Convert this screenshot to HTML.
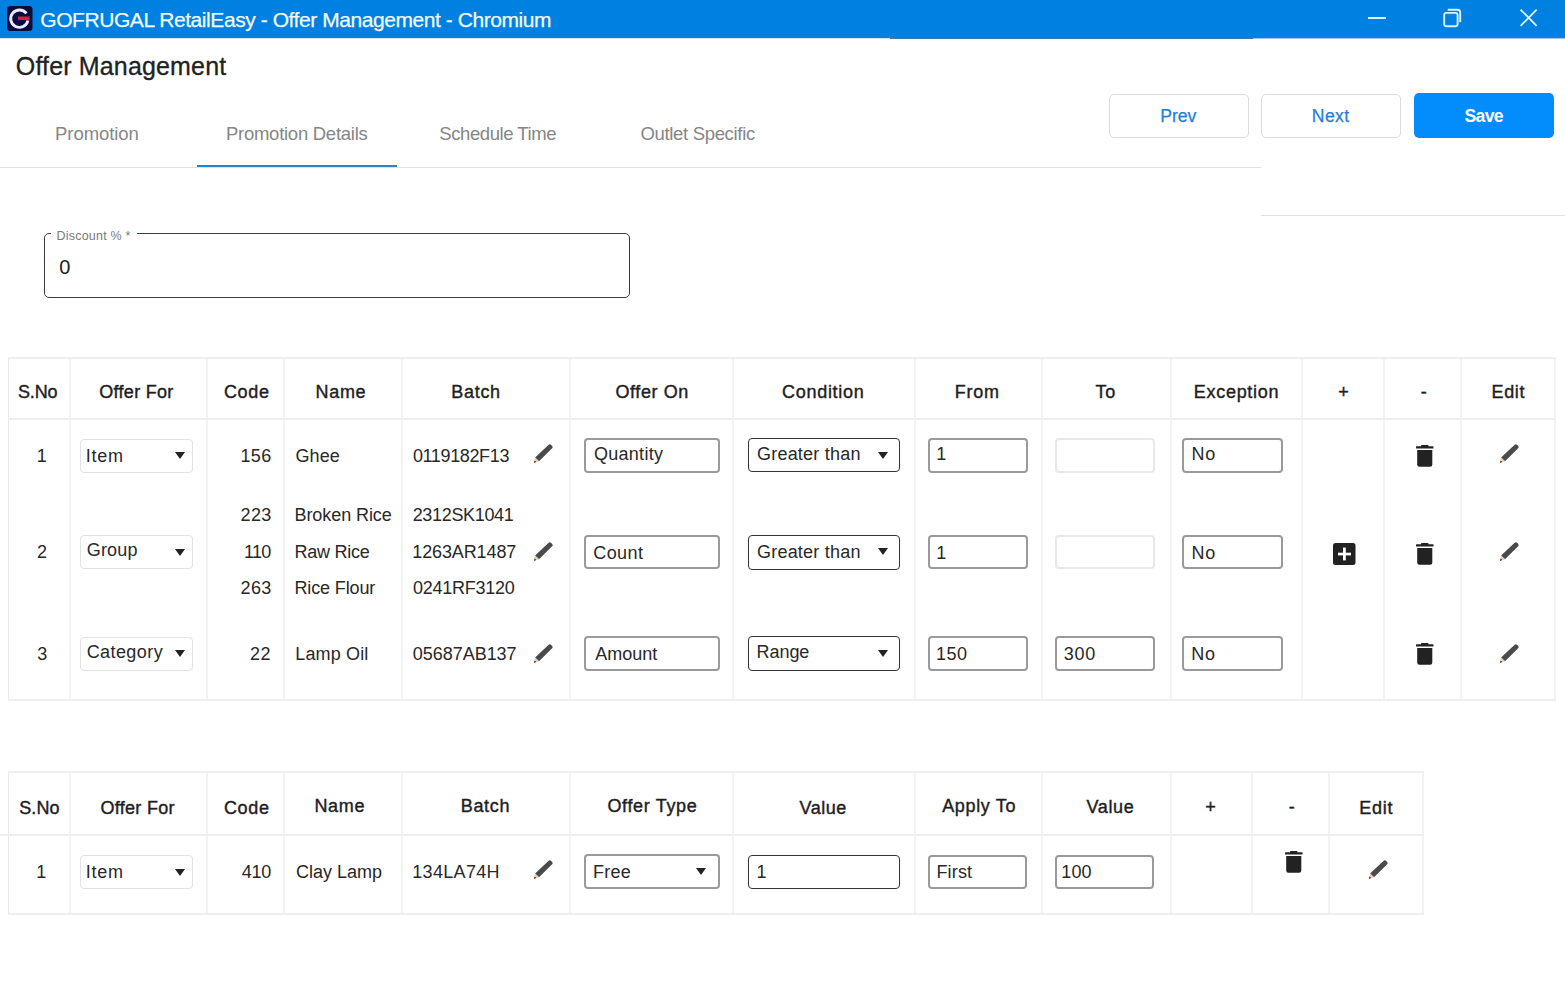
<!DOCTYPE html><html><head><meta charset="utf-8"><style>
html,body{margin:0;padding:0;background:#fff;width:1565px;height:1006px;overflow:hidden;position:relative;font-family:"Liberation Sans", sans-serif;}
.t{position:absolute;white-space:nowrap;line-height:1;font-family:"Liberation Sans", sans-serif;}
.b{position:absolute;}
</style></head><body>
<div class="b" style="left:0px;top:0px;width:1565px;height:38px;background:#0080E0;"></div>
<div class="b" style="left:0px;top:38px;width:890px;height:1px;background:#cfe6f8;"></div>
<div class="b" style="left:890px;top:38px;width:363px;height:1px;background:#3a78ad;"></div>
<div class="b" style="left:1253px;top:38px;width:312px;height:1px;background:#9cc6e8;"></div>
<svg class="b" style="left:7px;top:6px" width="26" height="26" viewBox="0 0 26 26"><rect x="0" y="0" width="25.5" height="25" rx="3.5" fill="#060d3c"/><path d="M19.38 7.46 A8.7 8.7 0 1 0 20.91 14.46" fill="none" stroke="#ebe8f4" stroke-width="2.9"/><rect x="11.1" y="10.5" width="11.5" height="3.6" fill="#dc1c38"/></svg>
<div class="t" style="left:40.25px;top:9px;font-size:21px;font-weight:400;color:#f4fbff;letter-spacing:-0.434px;-webkit-text-stroke:0.25px #f4fbff;">GOFRUGAL RetailEasy - Offer Management - Chromium</div>
<div class="b" style="left:1368px;top:17px;width:18px;height:2px;background:#d8f4ff;"></div>
<svg class="b" style="left:1440px;top:6px" width="24" height="24" viewBox="0 0 24 24"><rect x="4.2" y="6.9" width="13.4" height="13.4" rx="2.2" fill="none" stroke="#d8f4ff" stroke-width="1.9"/><path d="M7.7 3.7 H17.5 Q20.2 3.7 20.2 6.4 V16.2" fill="none" stroke="#d8f4ff" stroke-width="1.9"/></svg>
<svg class="b" style="left:1516px;top:5px" width="25" height="25" viewBox="0 0 25 25"><path d="M4.6 4.6 L20.6 20.9 M20.6 4.6 L4.6 20.9" fill="none" stroke="#e8faff" stroke-width="1.7"/></svg>
<div class="t" style="left:15.81px;top:54px;font-size:25px;font-weight:400;color:#222;letter-spacing:0.158px;-webkit-text-stroke:0.3px #222;">Offer Management</div>
<div class="t" style="left:55.07px;top:125px;font-size:18.5px;font-weight:400;color:#868686;letter-spacing:-0.073px;">Promotion</div>
<div class="t" style="left:225.97px;top:125px;font-size:18.5px;font-weight:400;color:#868686;letter-spacing:-0.265px;">Promotion Details</div>
<div class="t" style="left:439.37px;top:125px;font-size:18.5px;font-weight:400;color:#868686;letter-spacing:-0.438px;">Schedule Time</div>
<div class="t" style="left:640.42px;top:125px;font-size:18.5px;font-weight:400;color:#868686;letter-spacing:-0.321px;">Outlet Specific</div>
<div class="b" style="left:0px;top:167px;width:1261px;height:1px;background:#e0e0e0;"></div>
<div class="b" style="left:197px;top:165px;width:200px;height:2px;background:#1f86d6;"></div>
<div class="b" style="left:1261px;top:215px;width:304px;height:1px;background:#e0e0e0;"></div>
<div class="b" style="left:1109px;top:94px;width:140px;height:44px;border:1px solid #dcdcdc;border-radius:5px;box-sizing:border-box;"></div>
<div class="b" style="left:1261px;top:94px;width:140px;height:44px;border:1px solid #dcdcdc;border-radius:5px;box-sizing:border-box;"></div>
<div class="b" style="left:1414px;top:93px;width:140px;height:45px;background:#038dfc;border-radius:5px;"></div>
<div class="t" style="left:1160.35px;top:108px;font-size:17.6px;font-weight:400;color:#1f80d8;letter-spacing:-0.076px;-webkit-text-stroke:0.25px #1f80d8;">Prev</div>
<div class="t" style="left:1311.85px;top:108px;font-size:17.6px;font-weight:400;color:#1f80d8;letter-spacing:0.372px;-webkit-text-stroke:0.25px #1f80d8;">Next</div>
<div class="t" style="left:1464.47px;top:108px;font-size:17.6px;font-weight:700;color:#fff;letter-spacing:-0.665px;">Save</div>
<div class="b" style="left:44px;top:233px;width:586px;height:65px;border:1px solid #3a3a3a;border-radius:5px;box-sizing:border-box;"></div>
<div class="b" style="left:51px;top:230px;width:86px;height:6px;background:#fff;"></div>
<div class="t" style="left:56.47px;top:230px;font-size:12.5px;font-weight:400;color:#7a7a7a;letter-spacing:0.217px;">Discount % *</div>
<div class="t" style="left:59.20px;top:257px;font-size:20px;font-weight:400;color:#222;letter-spacing:0.000px;">0</div>
<div class="b" style="left:8px;top:357px;width:1px;height:344px;background:#e9e9e9;"></div>
<div class="b" style="left:69px;top:357px;width:2px;height:344px;background:#f3f3f3;"></div>
<div class="b" style="left:206px;top:357px;width:2px;height:344px;background:#f3f3f3;"></div>
<div class="b" style="left:283px;top:357px;width:2px;height:344px;background:#f3f3f3;"></div>
<div class="b" style="left:401px;top:357px;width:2px;height:344px;background:#f3f3f3;"></div>
<div class="b" style="left:569px;top:357px;width:2px;height:344px;background:#f3f3f3;"></div>
<div class="b" style="left:732px;top:357px;width:2px;height:344px;background:#f3f3f3;"></div>
<div class="b" style="left:914px;top:357px;width:2px;height:344px;background:#f3f3f3;"></div>
<div class="b" style="left:1041px;top:357px;width:2px;height:344px;background:#f3f3f3;"></div>
<div class="b" style="left:1170px;top:357px;width:2px;height:344px;background:#f3f3f3;"></div>
<div class="b" style="left:1301px;top:357px;width:2px;height:344px;background:#f3f3f3;"></div>
<div class="b" style="left:1383px;top:357px;width:2px;height:344px;background:#f3f3f3;"></div>
<div class="b" style="left:1460px;top:357px;width:2px;height:344px;background:#f3f3f3;"></div>
<div class="b" style="left:1554px;top:357px;width:2px;height:344px;background:#f3f3f3;"></div>
<div class="b" style="left:8px;top:357px;width:1548px;height:2px;background:#eeeeee;"></div>
<div class="b" style="left:8px;top:418px;width:1548px;height:2px;background:#eeeeee;"></div>
<div class="b" style="left:8px;top:699px;width:1548px;height:2px;background:#eeeeee;"></div>
<div class="t" style="left:17.89px;top:383px;font-size:18px;font-weight:400;color:#1e1e1e;letter-spacing:-0.092px;-webkit-text-stroke:0.4px #1e1e1e;">S.No</div>
<div class="t" style="left:99.24px;top:383px;font-size:18px;font-weight:400;color:#1e1e1e;letter-spacing:0.305px;-webkit-text-stroke:0.4px #1e1e1e;">Offer For</div>
<div class="t" style="left:223.90px;top:383px;font-size:18px;font-weight:400;color:#1e1e1e;letter-spacing:0.700px;-webkit-text-stroke:0.4px #1e1e1e;">Code</div>
<div class="t" style="left:315.51px;top:383px;font-size:18px;font-weight:400;color:#1e1e1e;letter-spacing:0.700px;-webkit-text-stroke:0.4px #1e1e1e;">Name</div>
<div class="t" style="left:451.31px;top:383px;font-size:18px;font-weight:400;color:#1e1e1e;letter-spacing:0.700px;-webkit-text-stroke:0.4px #1e1e1e;">Batch</div>
<div class="t" style="left:615.54px;top:383px;font-size:18px;font-weight:400;color:#1e1e1e;letter-spacing:0.579px;-webkit-text-stroke:0.4px #1e1e1e;">Offer On</div>
<div class="t" style="left:782.10px;top:383px;font-size:18px;font-weight:400;color:#1e1e1e;letter-spacing:0.700px;-webkit-text-stroke:0.4px #1e1e1e;">Condition</div>
<div class="t" style="left:954.81px;top:383px;font-size:18px;font-weight:400;color:#1e1e1e;letter-spacing:0.700px;-webkit-text-stroke:0.4px #1e1e1e;">From</div>
<div class="t" style="left:1095.60px;top:383px;font-size:18px;font-weight:400;color:#1e1e1e;letter-spacing:0.700px;-webkit-text-stroke:0.4px #1e1e1e;">To</div>
<div class="t" style="left:1193.82px;top:383px;font-size:18px;font-weight:400;color:#1e1e1e;letter-spacing:0.700px;-webkit-text-stroke:0.4px #1e1e1e;">Exception</div>
<div class="t" style="left:1338.30px;top:383px;font-size:18px;font-weight:400;color:#1e1e1e;letter-spacing:0.000px;-webkit-text-stroke:0.4px #1e1e1e;">+</div>
<div class="t" style="left:1420.79px;top:383px;font-size:18px;font-weight:400;color:#1e1e1e;letter-spacing:0.000px;-webkit-text-stroke:0.4px #1e1e1e;">-</div>
<div class="t" style="left:1491.52px;top:383px;font-size:18px;font-weight:400;color:#1e1e1e;letter-spacing:0.638px;-webkit-text-stroke:0.4px #1e1e1e;">Edit</div>
<div class="t" style="left:36.65px;top:447px;font-size:18px;font-weight:400;color:#282828;letter-spacing:0.000px;">1</div>
<div class="b" style="left:80px;top:439px;width:113px;height:34px;border:1px solid #e2e2e2;border-radius:4px;box-sizing:border-box;background:#fff;"></div>
<div class="t" style="left:85.83px;top:447px;font-size:18px;font-weight:400;color:#282828;letter-spacing:0.700px;">Item</div>
<svg class="b" style="left:175px;top:452.4px" width="10" height="7" viewBox="0 0 10 7"><path d="M0 0H10L5 7Z" fill="#222"/></svg>
<div class="t" style="left:240.45px;top:447px;font-size:18px;font-weight:400;color:#282828;letter-spacing:0.400px;">156</div>
<div class="t" style="left:295.40px;top:447px;font-size:18px;font-weight:400;color:#282828;letter-spacing:0.118px;">Ghee</div>
<div class="t" style="left:412.88px;top:447px;font-size:18px;font-weight:400;color:#282828;letter-spacing:-0.359px;">0119182F13</div>
<svg class="b" style="left:531px;top:443px" width="22" height="22" viewBox="0 0 22 22"><path d="M4.1 14.5 L17.4 1.9 Q18.8 0.6 20.2 2.0 L21.0 2.8 Q22.3 4.2 20.9 5.6 L8.0 18.3 Z" fill="#4a4a4a"/><path d="M4.1 14.5 L8.0 18.3 L2.9 19.9 Z" fill="#f1c9ab"/><path d="M3.6 17.6 L5.2 19.1 L2.9 19.9 Z" fill="#2e2e2e"/></svg>
<div class="b" style="left:584px;top:438px;width:136px;height:35px;border:2px solid #9a9a9a;border-radius:4px;box-sizing:border-box;background:#fff;"></div>
<div class="t" style="left:594.04px;top:445px;font-size:18px;font-weight:400;color:#282828;letter-spacing:0.264px;">Quantity</div>
<div class="b" style="left:748px;top:438px;width:152px;height:34px;border:1px solid #333333;border-radius:4px;box-sizing:border-box;background:#fff;"></div>
<div class="t" style="left:757.00px;top:445px;font-size:18px;font-weight:400;color:#282828;letter-spacing:0.213px;">Greater than</div>
<svg class="b" style="left:878px;top:452.3px" width="10" height="7" viewBox="0 0 10 7"><path d="M0 0H10L5 7Z" fill="#222"/></svg>
<div class="b" style="left:928px;top:438px;width:100px;height:35px;border:2px solid #9a9a9a;border-radius:4px;box-sizing:border-box;background:#fff;"></div>
<div class="t" style="left:936.35px;top:445px;font-size:18px;font-weight:400;color:#282828;letter-spacing:0.000px;">1</div>
<div class="b" style="left:1055px;top:438px;width:100px;height:35px;border:2px solid #e8e8e8;border-radius:4px;box-sizing:border-box;background:#fff;"></div>
<div class="b" style="left:1182px;top:438px;width:101px;height:35px;border:2px solid #9a9a9a;border-radius:4px;box-sizing:border-box;background:#fff;"></div>
<div class="t" style="left:1191.52px;top:445px;font-size:18px;font-weight:400;color:#282828;letter-spacing:0.700px;">No</div>
<svg class="b" style="left:1416px;top:445px" width="18" height="22" viewBox="0 0 18 22"><rect x="0" y="1.2" width="17.5" height="2.4" rx="0.6" fill="#222"/><rect x="5" y="0" width="7.5" height="2" rx="0.8" fill="#222"/><path d="M1.2 5 H16.3 V19.6 Q16.3 21.8 14.1 21.8 H3.4 Q1.2 21.8 1.2 19.6 Z" fill="#222"/></svg>
<svg class="b" style="left:1497px;top:443px" width="22" height="22" viewBox="0 0 22 22"><path d="M4.1 14.5 L17.4 1.9 Q18.8 0.6 20.2 2.0 L21.0 2.8 Q22.3 4.2 20.9 5.6 L8.0 18.3 Z" fill="#4a4a4a"/><path d="M4.1 14.5 L8.0 18.3 L2.9 19.9 Z" fill="#f1c9ab"/><path d="M3.6 17.6 L5.2 19.1 L2.9 19.9 Z" fill="#2e2e2e"/></svg>
<div class="t" style="left:37.10px;top:543px;font-size:18px;font-weight:400;color:#282828;letter-spacing:0.000px;">2</div>
<div class="b" style="left:80px;top:535px;width:113px;height:34px;border:1px solid #e2e2e2;border-radius:4px;box-sizing:border-box;background:#fff;"></div>
<div class="t" style="left:86.80px;top:541px;font-size:18px;font-weight:400;color:#282828;letter-spacing:0.156px;">Group</div>
<svg class="b" style="left:175px;top:548.5px" width="10" height="7" viewBox="0 0 10 7"><path d="M0 0H10L5 7Z" fill="#222"/></svg>
<div class="t" style="left:240.60px;top:506px;font-size:18px;font-weight:400;color:#282828;letter-spacing:0.325px;">223</div>
<div class="t" style="left:294.51px;top:506px;font-size:18px;font-weight:400;color:#282828;letter-spacing:-0.076px;">Broken Rice</div>
<div class="t" style="left:412.70px;top:506px;font-size:18px;font-weight:400;color:#282828;letter-spacing:-0.337px;">2312SK1041</div>
<div class="t" style="left:243.95px;top:543px;font-size:18px;font-weight:400;color:#282828;letter-spacing:-0.720px;">110</div>
<div class="t" style="left:294.51px;top:543px;font-size:18px;font-weight:400;color:#282828;letter-spacing:-0.249px;">Raw Rice</div>
<div class="t" style="left:412.25px;top:543px;font-size:18px;font-weight:400;color:#282828;letter-spacing:-0.114px;">1263AR1487</div>
<div class="t" style="left:240.60px;top:579px;font-size:18px;font-weight:400;color:#282828;letter-spacing:0.325px;">263</div>
<div class="t" style="left:294.51px;top:579px;font-size:18px;font-weight:400;color:#282828;letter-spacing:-0.142px;">Rice Flour</div>
<div class="t" style="left:412.88px;top:579px;font-size:18px;font-weight:400;color:#282828;letter-spacing:-0.232px;">0241RF3120</div>
<svg class="b" style="left:531px;top:541px" width="22" height="22" viewBox="0 0 22 22"><path d="M4.1 14.5 L17.4 1.9 Q18.8 0.6 20.2 2.0 L21.0 2.8 Q22.3 4.2 20.9 5.6 L8.0 18.3 Z" fill="#4a4a4a"/><path d="M4.1 14.5 L8.0 18.3 L2.9 19.9 Z" fill="#f1c9ab"/><path d="M3.6 17.6 L5.2 19.1 L2.9 19.9 Z" fill="#2e2e2e"/></svg>
<div class="b" style="left:584px;top:535px;width:136px;height:34px;border:2px solid #9a9a9a;border-radius:4px;box-sizing:border-box;background:#fff;"></div>
<div class="t" style="left:593.30px;top:544px;font-size:18px;font-weight:400;color:#282828;letter-spacing:0.405px;">Count</div>
<div class="b" style="left:748px;top:535px;width:152px;height:35px;border:1px solid #333333;border-radius:4px;box-sizing:border-box;background:#fff;"></div>
<div class="t" style="left:757.00px;top:543px;font-size:18px;font-weight:400;color:#282828;letter-spacing:0.213px;">Greater than</div>
<svg class="b" style="left:878px;top:548.3px" width="10" height="7" viewBox="0 0 10 7"><path d="M0 0H10L5 7Z" fill="#222"/></svg>
<div class="b" style="left:928px;top:535px;width:100px;height:34px;border:2px solid #9a9a9a;border-radius:4px;box-sizing:border-box;background:#fff;"></div>
<div class="t" style="left:936.35px;top:544px;font-size:18px;font-weight:400;color:#282828;letter-spacing:0.000px;">1</div>
<div class="b" style="left:1055px;top:535px;width:100px;height:34px;border:2px solid #e8e8e8;border-radius:4px;box-sizing:border-box;background:#fff;"></div>
<div class="b" style="left:1182px;top:535px;width:101px;height:34px;border:2px solid #9a9a9a;border-radius:4px;box-sizing:border-box;background:#fff;"></div>
<div class="t" style="left:1191.52px;top:544px;font-size:18px;font-weight:400;color:#282828;letter-spacing:0.700px;">No</div>
<svg class="b" style="left:1333.4px;top:543px" width="23" height="23" viewBox="0 0 23 23"><rect x="0" y="0" width="22.5" height="22" rx="2.5" fill="#222"/><rect x="5" y="9.7" width="13" height="2.7" fill="#fff"/><rect x="10" y="4.6" width="2.8" height="12.8" fill="#fff"/></svg>
<svg class="b" style="left:1416px;top:543px" width="18" height="22" viewBox="0 0 18 22"><rect x="0" y="1.2" width="17.5" height="2.4" rx="0.6" fill="#222"/><rect x="5" y="0" width="7.5" height="2" rx="0.8" fill="#222"/><path d="M1.2 5 H16.3 V19.6 Q16.3 21.8 14.1 21.8 H3.4 Q1.2 21.8 1.2 19.6 Z" fill="#222"/></svg>
<svg class="b" style="left:1497px;top:540.6px" width="22" height="22" viewBox="0 0 22 22"><path d="M4.1 14.5 L17.4 1.9 Q18.8 0.6 20.2 2.0 L21.0 2.8 Q22.3 4.2 20.9 5.6 L8.0 18.3 Z" fill="#4a4a4a"/><path d="M4.1 14.5 L8.0 18.3 L2.9 19.9 Z" fill="#f1c9ab"/><path d="M3.6 17.6 L5.2 19.1 L2.9 19.9 Z" fill="#2e2e2e"/></svg>
<div class="t" style="left:37.33px;top:645px;font-size:18px;font-weight:400;color:#282828;letter-spacing:0.000px;">3</div>
<div class="b" style="left:80px;top:637px;width:113px;height:34px;border:1px solid #e2e2e2;border-radius:4px;box-sizing:border-box;background:#fff;"></div>
<div class="t" style="left:86.70px;top:643px;font-size:18px;font-weight:400;color:#282828;letter-spacing:0.416px;">Category</div>
<svg class="b" style="left:175.4px;top:650.3px" width="10" height="7" viewBox="0 0 10 7"><path d="M0 0H10L5 7Z" fill="#222"/></svg>
<div class="t" style="left:249.92px;top:645px;font-size:18px;font-weight:400;color:#282828;letter-spacing:0.700px;">22</div>
<div class="t" style="left:295.31px;top:645px;font-size:18px;font-weight:400;color:#282828;letter-spacing:0.136px;">Lamp Oil</div>
<div class="t" style="left:412.78px;top:645px;font-size:18px;font-weight:400;color:#282828;letter-spacing:-0.029px;">05687AB137</div>
<svg class="b" style="left:531px;top:642.7px" width="22" height="22" viewBox="0 0 22 22"><path d="M4.1 14.5 L17.4 1.9 Q18.8 0.6 20.2 2.0 L21.0 2.8 Q22.3 4.2 20.9 5.6 L8.0 18.3 Z" fill="#4a4a4a"/><path d="M4.1 14.5 L8.0 18.3 L2.9 19.9 Z" fill="#f1c9ab"/><path d="M3.6 17.6 L5.2 19.1 L2.9 19.9 Z" fill="#2e2e2e"/></svg>
<div class="b" style="left:584px;top:636px;width:136px;height:35px;border:2px solid #9a9a9a;border-radius:4px;box-sizing:border-box;background:#fff;"></div>
<div class="t" style="left:595.16px;top:645px;font-size:18px;font-weight:400;color:#282828;letter-spacing:0.034px;">Amount</div>
<div class="b" style="left:748px;top:636px;width:152px;height:35px;border:1px solid #333333;border-radius:4px;box-sizing:border-box;background:#fff;"></div>
<div class="t" style="left:756.51px;top:643px;font-size:18px;font-weight:400;color:#282828;letter-spacing:-0.040px;">Range</div>
<svg class="b" style="left:878px;top:650.3px" width="10" height="7" viewBox="0 0 10 7"><path d="M0 0H10L5 7Z" fill="#222"/></svg>
<div class="b" style="left:928px;top:636px;width:100px;height:35px;border:2px solid #9a9a9a;border-radius:4px;box-sizing:border-box;background:#fff;"></div>
<div class="t" style="left:936.05px;top:645px;font-size:18px;font-weight:400;color:#282828;letter-spacing:0.505px;">150</div>
<div class="b" style="left:1055px;top:636px;width:100px;height:35px;border:2px solid #9a9a9a;border-radius:4px;box-sizing:border-box;background:#fff;"></div>
<div class="t" style="left:1063.73px;top:645px;font-size:18px;font-weight:400;color:#282828;letter-spacing:0.700px;">300</div>
<div class="b" style="left:1182px;top:636px;width:101px;height:35px;border:2px solid #9a9a9a;border-radius:4px;box-sizing:border-box;background:#fff;"></div>
<div class="t" style="left:1191.22px;top:645px;font-size:18px;font-weight:400;color:#282828;letter-spacing:0.700px;">No</div>
<svg class="b" style="left:1416px;top:643px" width="18" height="22" viewBox="0 0 18 22"><rect x="0" y="1.2" width="17.5" height="2.4" rx="0.6" fill="#222"/><rect x="5" y="0" width="7.5" height="2" rx="0.8" fill="#222"/><path d="M1.2 5 H16.3 V19.6 Q16.3 21.8 14.1 21.8 H3.4 Q1.2 21.8 1.2 19.6 Z" fill="#222"/></svg>
<svg class="b" style="left:1497px;top:643px" width="22" height="22" viewBox="0 0 22 22"><path d="M4.1 14.5 L17.4 1.9 Q18.8 0.6 20.2 2.0 L21.0 2.8 Q22.3 4.2 20.9 5.6 L8.0 18.3 Z" fill="#4a4a4a"/><path d="M4.1 14.5 L8.0 18.3 L2.9 19.9 Z" fill="#f1c9ab"/><path d="M3.6 17.6 L5.2 19.1 L2.9 19.9 Z" fill="#2e2e2e"/></svg>
<div class="b" style="left:8px;top:771px;width:1px;height:144px;background:#e9e9e9;"></div>
<div class="b" style="left:69px;top:771px;width:2px;height:144px;background:#f3f3f3;"></div>
<div class="b" style="left:206px;top:771px;width:2px;height:144px;background:#f3f3f3;"></div>
<div class="b" style="left:283px;top:771px;width:2px;height:144px;background:#f3f3f3;"></div>
<div class="b" style="left:401px;top:771px;width:2px;height:144px;background:#f3f3f3;"></div>
<div class="b" style="left:569px;top:771px;width:2px;height:144px;background:#f3f3f3;"></div>
<div class="b" style="left:732px;top:771px;width:2px;height:144px;background:#f3f3f3;"></div>
<div class="b" style="left:914px;top:771px;width:2px;height:144px;background:#f3f3f3;"></div>
<div class="b" style="left:1041px;top:771px;width:2px;height:144px;background:#f3f3f3;"></div>
<div class="b" style="left:1170px;top:771px;width:2px;height:144px;background:#f3f3f3;"></div>
<div class="b" style="left:1251px;top:771px;width:2px;height:144px;background:#f3f3f3;"></div>
<div class="b" style="left:1328px;top:771px;width:2px;height:144px;background:#f3f3f3;"></div>
<div class="b" style="left:1422px;top:771px;width:2px;height:144px;background:#f3f3f3;"></div>
<div class="b" style="left:8px;top:771px;width:1416px;height:2px;background:#eeeeee;"></div>
<div class="b" style="left:8px;top:834px;width:1416px;height:2px;background:#eeeeee;"></div>
<div class="b" style="left:8px;top:913px;width:1416px;height:2px;background:#eeeeee;"></div>
<div class="b" style="left:0px;top:834px;width:8px;height:2px;background:#eeeeee;"></div>
<div class="t" style="left:19.19px;top:799px;font-size:18px;font-weight:400;color:#1e1e1e;letter-spacing:0.142px;-webkit-text-stroke:0.4px #1e1e1e;">S.No</div>
<div class="t" style="left:100.55px;top:799px;font-size:18px;font-weight:400;color:#1e1e1e;letter-spacing:0.280px;-webkit-text-stroke:0.4px #1e1e1e;">Offer For</div>
<div class="t" style="left:223.90px;top:799px;font-size:18px;font-weight:400;color:#1e1e1e;letter-spacing:0.700px;-webkit-text-stroke:0.4px #1e1e1e;">Code</div>
<div class="t" style="left:314.41px;top:797px;font-size:18px;font-weight:400;color:#1e1e1e;letter-spacing:0.700px;-webkit-text-stroke:0.4px #1e1e1e;">Name</div>
<div class="t" style="left:460.71px;top:797px;font-size:18px;font-weight:400;color:#1e1e1e;letter-spacing:0.700px;-webkit-text-stroke:0.4px #1e1e1e;">Batch</div>
<div class="t" style="left:607.44px;top:797px;font-size:18px;font-weight:400;color:#1e1e1e;letter-spacing:0.659px;-webkit-text-stroke:0.4px #1e1e1e;">Offer Type</div>
<div class="t" style="left:799.51px;top:799px;font-size:18px;font-weight:400;color:#1e1e1e;letter-spacing:0.543px;-webkit-text-stroke:0.4px #1e1e1e;">Value</div>
<div class="t" style="left:942.16px;top:797px;font-size:18px;font-weight:400;color:#1e1e1e;letter-spacing:0.664px;-webkit-text-stroke:0.4px #1e1e1e;">Apply To</div>
<div class="t" style="left:1086.51px;top:798px;font-size:18px;font-weight:400;color:#1e1e1e;letter-spacing:0.643px;-webkit-text-stroke:0.4px #1e1e1e;">Value</div>
<div class="t" style="left:1205.30px;top:798px;font-size:18px;font-weight:400;color:#1e1e1e;letter-spacing:0.000px;-webkit-text-stroke:0.4px #1e1e1e;">+</div>
<div class="t" style="left:1288.69px;top:798px;font-size:18px;font-weight:400;color:#1e1e1e;letter-spacing:0.000px;-webkit-text-stroke:0.4px #1e1e1e;">-</div>
<div class="t" style="left:1359.32px;top:799px;font-size:18px;font-weight:400;color:#1e1e1e;letter-spacing:0.700px;-webkit-text-stroke:0.4px #1e1e1e;">Edit</div>
<div class="t" style="left:36.15px;top:863px;font-size:18px;font-weight:400;color:#282828;letter-spacing:0.000px;">1</div>
<div class="b" style="left:80px;top:855px;width:113px;height:34px;border:1px solid #e2e2e2;border-radius:4px;box-sizing:border-box;background:#fff;"></div>
<div class="t" style="left:85.83px;top:863px;font-size:18px;font-weight:400;color:#282828;letter-spacing:0.700px;">Item</div>
<svg class="b" style="left:175px;top:868.5px" width="10" height="7" viewBox="0 0 10 7"><path d="M0 0H10L5 7Z" fill="#222"/></svg>
<div class="t" style="left:241.79px;top:863px;font-size:18px;font-weight:400;color:#282828;letter-spacing:-0.317px;">410</div>
<div class="t" style="left:296.00px;top:863px;font-size:18px;font-weight:400;color:#282828;letter-spacing:-0.015px;">Clay Lamp</div>
<div class="t" style="left:412.25px;top:863px;font-size:18px;font-weight:400;color:#282828;letter-spacing:0.320px;">134LA74H</div>
<svg class="b" style="left:531px;top:858.7px" width="22" height="22" viewBox="0 0 22 22"><path d="M4.1 14.5 L17.4 1.9 Q18.8 0.6 20.2 2.0 L21.0 2.8 Q22.3 4.2 20.9 5.6 L8.0 18.3 Z" fill="#4a4a4a"/><path d="M4.1 14.5 L8.0 18.3 L2.9 19.9 Z" fill="#f1c9ab"/><path d="M3.6 17.6 L5.2 19.1 L2.9 19.9 Z" fill="#2e2e2e"/></svg>
<div class="b" style="left:584px;top:854px;width:136px;height:35px;border:2px solid #9a9a9a;border-radius:4px;box-sizing:border-box;background:#fff;"></div>
<div class="t" style="left:593.12px;top:863px;font-size:18px;font-weight:400;color:#282828;letter-spacing:0.220px;">Free</div>
<svg class="b" style="left:696.4px;top:868.3px" width="10" height="7" viewBox="0 0 10 7"><path d="M0 0H10L5 7Z" fill="#222"/></svg>
<div class="b" style="left:748px;top:855px;width:152px;height:34px;border:1px solid #333333;border-radius:4px;box-sizing:border-box;background:#fff;"></div>
<div class="t" style="left:756.55px;top:863px;font-size:18px;font-weight:400;color:#282828;letter-spacing:0.000px;">1</div>
<div class="b" style="left:928px;top:855px;width:99px;height:34px;border:2px solid #9a9a9a;border-radius:4px;box-sizing:border-box;background:#fff;"></div>
<div class="t" style="left:936.41px;top:863px;font-size:18px;font-weight:400;color:#282828;letter-spacing:0.164px;">First</div>
<div class="b" style="left:1055px;top:855px;width:99px;height:34px;border:2px solid #9a9a9a;border-radius:4px;box-sizing:border-box;background:#fff;"></div>
<div class="t" style="left:1061.35px;top:863px;font-size:18px;font-weight:400;color:#282828;letter-spacing:0.105px;">100</div>
<svg class="b" style="left:1285px;top:851px" width="18" height="22" viewBox="0 0 18 22"><rect x="0" y="1.2" width="17.5" height="2.4" rx="0.6" fill="#222"/><rect x="5" y="0" width="7.5" height="2" rx="0.8" fill="#222"/><path d="M1.2 5 H16.3 V19.6 Q16.3 21.8 14.1 21.8 H3.4 Q1.2 21.8 1.2 19.6 Z" fill="#222"/></svg>
<svg class="b" style="left:1366.3px;top:858.6px" width="22" height="22" viewBox="0 0 22 22"><path d="M4.1 14.5 L17.4 1.9 Q18.8 0.6 20.2 2.0 L21.0 2.8 Q22.3 4.2 20.9 5.6 L8.0 18.3 Z" fill="#4a4a4a"/><path d="M4.1 14.5 L8.0 18.3 L2.9 19.9 Z" fill="#f1c9ab"/><path d="M3.6 17.6 L5.2 19.1 L2.9 19.9 Z" fill="#2e2e2e"/></svg>
</body></html>
